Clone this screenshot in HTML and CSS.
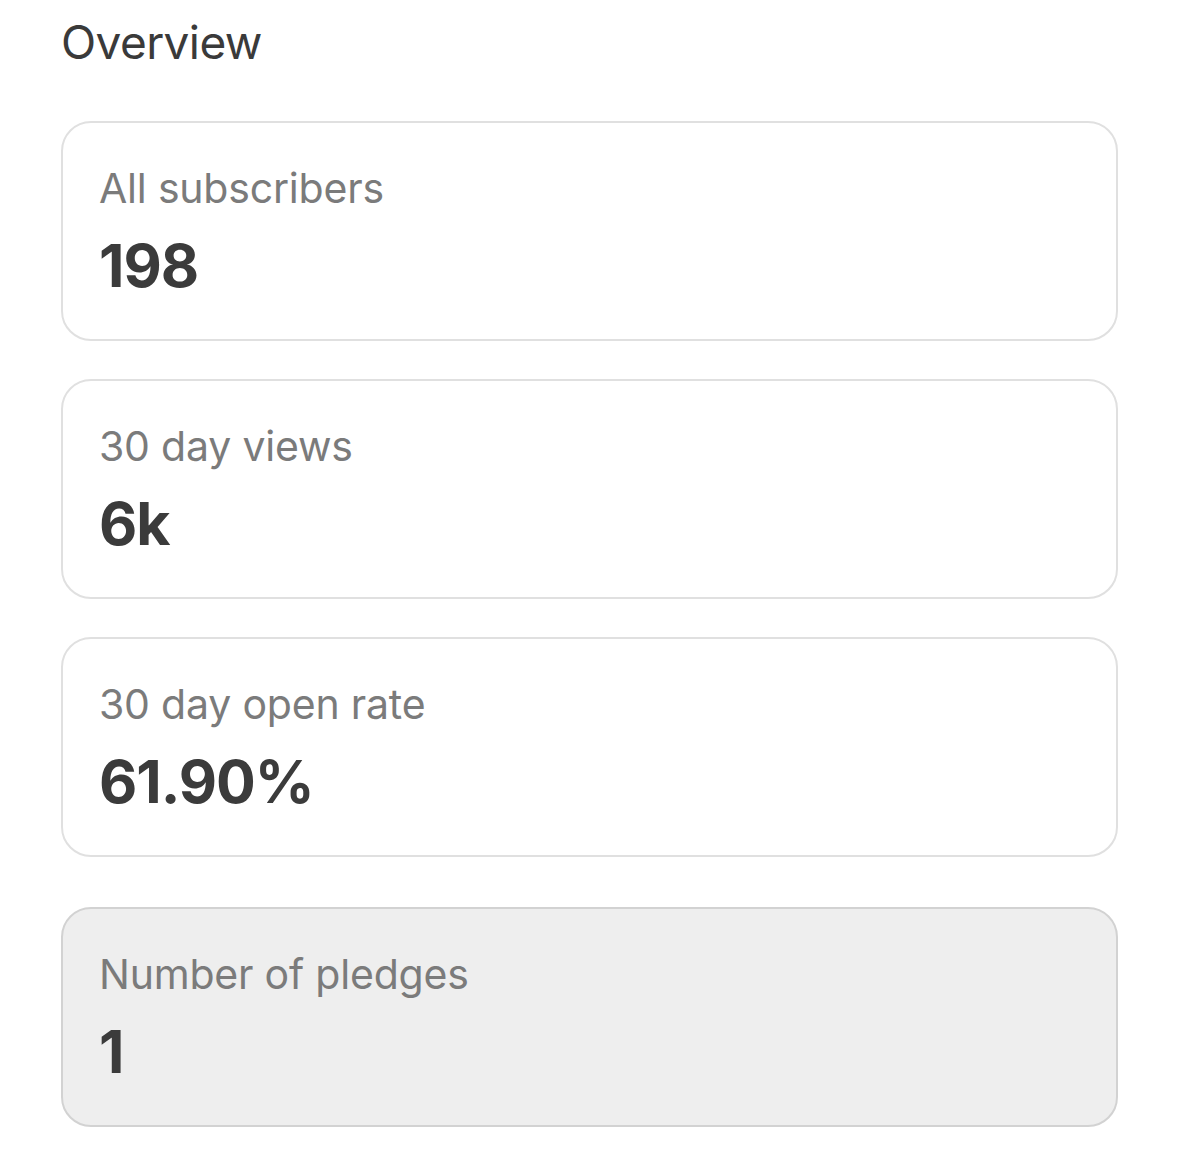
FILE: index.html
```html
<!DOCTYPE html>
<html lang="en">
<head>
  <meta charset="UTF-8">
  <meta name="viewport" content="width=device-width, initial-scale=1.0">
  <title>Overview</title>
  <link rel="stylesheet" href="styles.css">
</head>
<body>
  <div class="page">
    <h1>Overview</h1>

    <div class="stats">
      <div class="stat-card">
        <div class="stat-label">All subscribers</div>
        <div class="stat-value">198</div>
      </div>
      <div class="stat-card">
        <div class="stat-label">30 day views</div>
        <div class="stat-value">6k</div>
      </div>
      <div class="stat-card">
        <div class="stat-label">30 day open rate</div>
        <div class="stat-value">61.90%</div>
      </div>
      <div class="stat-card stat-card-muted">
        <div class="stat-label">Number of pledges</div>
        <div class="stat-value">1</div>
      </div>
    </div>
  </div>
</body>
</html>
```

FILE: styles.css
```css
body {
  font-family: Inter, 'Liberation Sans', Arial, sans-serif;
  margin: 0;
  background: #fff;
}
.page {
  padding: 14px 61px 0 61px;
}
h1 {
  font-size: 46px;
  line-height: 56px;
  font-weight: 400;
  letter-spacing: -0.6px;
  color: #3a3a3a;
  margin: 0 0 51px;
}
.stats {
  display: flex;
  flex-direction: column;
  gap: 38px;
}
.stat-card {
  border: 2px solid #e0e0e0;
  border-radius: 30px;
  padding: 40px 37px 43px 36px;
  background: #fff;
}
.stat-card-muted {
  margin-top: 12px;
  background: #eeeeee;
  border-color: #d2d2d2;
}
.stat-label {
  font-size: 41px;
  line-height: 50px;
  letter-spacing: -0.2px;
  color: #7b7b7b;
}
.stat-value {
  margin-top: 23px;
  font-size: 59px;
  line-height: 60px;
  font-weight: 700;
  letter-spacing: -1px;
  color: #3b3b3b;
}
```
